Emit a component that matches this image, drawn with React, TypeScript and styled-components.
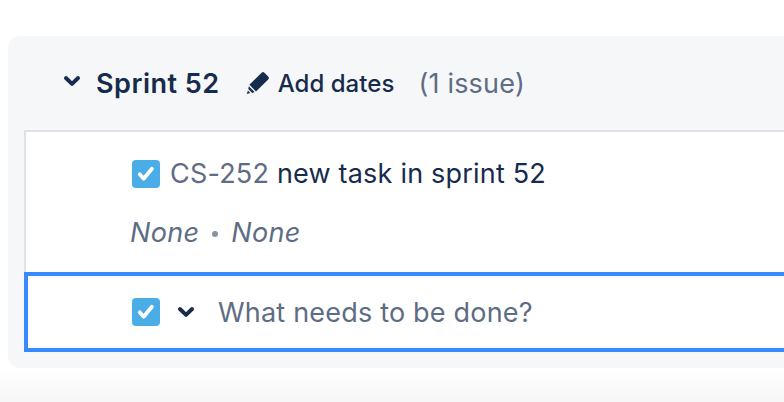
import React from 'react';
import styled, { createGlobalStyle } from 'styled-components';

const GlobalStyle = createGlobalStyle`
    html, body {
        margin: 0;
        padding: 0;
        background: #fff;
    }
    body {
        font-family: Inter, "Liberation Sans", sans-serif;
        color: #172b4d;
    }
`;

const Page = styled.div`
    width: 784px;
    height: 402px;
    overflow: hidden;
    padding-top: 36px;
    box-sizing: border-box;
    background: linear-gradient(to bottom, #fff 0, #fff 368px, #f7f7f7 402px);
`;

const Panel = styled.section`
    margin-left: 8px;
    width: 800px;
    height: 332px;
    box-sizing: border-box;
    padding: 0 0 16px 16px;
    background: #f6f7f9;
    border-radius: 12px;
    display: flex;
    flex-direction: column;
`;

const Header = styled.header`
    height: 94px;
    padding-left: 38px;
    box-sizing: border-box;
    display: flex;
    align-items: center;
`;

const Toggle = styled.svg<{ $lift?: number }>`
    width: 20px;
    height: 20px;
    flex: none;
    margin-bottom: ${p => p.$lift ?? 0}px;
    color: #172b4d;
`;

const SprintName = styled.h2`
    margin: 0 0 0 14px;
    font-size: 27px;
    font-weight: 600;
    letter-spacing: 0.5px;
    white-space: nowrap;
`;

const AddDates = styled.button`
    margin-left: 26px;
    padding: 0;
    border: 0;
    background: none;
    display: flex;
    align-items: center;
    gap: 8px;
    font: 500 24px Inter, "Liberation Sans", sans-serif;
    letter-spacing: 0.05px;
    color: #172b4d;
    white-space: nowrap;
`;

const Count = styled.span`
    margin-left: 24px;
    font-size: 27px;
    letter-spacing: 0.2px;
    color: #5e6c84;
    white-space: nowrap;
`;

const List = styled.div`
    flex: 1;
    display: flex;
    flex-direction: column;
    background: #fff;
`;

const Issue = styled.article`
    height: 142px;
    box-sizing: border-box;
    padding: 26px 0 0 106px;
    border: 2px solid #dfe1e6;
    border-bottom: 0;
`;

const TitleLine = styled.div`
    display: flex;
    align-items: center;
    gap: 10px;
    font-size: 27px;
    line-height: 32px;
    letter-spacing: 0.2px;
    white-space: nowrap;
`;

const IssueKey = styled.span`
    color: #5e6c84;
`;

const Meta = styled.div`
    margin-top: 27px;
    margin-left: -2px;
    display: flex;
    align-items: center;
    gap: 13px;
    font-size: 27px;
    line-height: 32px;
    letter-spacing: 0.3px;
    font-style: italic;
    color: #5e6c84;
`;

const Dot = styled.span`
    width: 6px;
    height: 6px;
    margin-top: 2px;
    border-radius: 50%;
    background: #8993a4;
`;

const Composer = styled.div`
    height: 80px;
    box-sizing: border-box;
    padding-left: 104px;
    border: 4px solid #388bff;
    display: flex;
    align-items: center;
    gap: 16px;
`;

const ComposerInput = styled.span`
    margin-left: 6px;
    font-size: 27px;
    letter-spacing: 0.2px;
    color: #5e6c84;
    white-space: nowrap;
`;

const CheckBox = styled.svg`
    width: 28px;
    height: 28px;
    flex: none;
`;

function TaskIcon() {
    return (
        <CheckBox viewBox="0 0 28 28">
            <rect width="28" height="28" rx="4" fill="#4bade8" />
            <path d="M7.7 14.3l4 4.4 8.2-10" fill="none" stroke="#fff" strokeWidth="3.8" strokeLinecap="round" strokeLinejoin="round" />
        </CheckBox>
    );
}

function Chevron({ lift }: { lift?: number }) {
    return (
        <Toggle $lift={lift} viewBox="0 0 16 16">
            <path d="M3.15 5.6L8 10.3l4.85-4.7" fill="none" stroke="currentColor" strokeWidth="3.1" strokeLinecap="round" strokeLinejoin="round" />
        </Toggle>
    );
}

function Pencil() {
    return (
        <svg width="24" height="24" viewBox="0 0 24 24">
            <path d="M15.6 1.8a2 2 0 0 1 2.8 0l3.8 3.8a2 2 0 0 1 0 2.8L10 20.4 3.4 13.8z" fill="#172b4d" />
            <path d="M2.8 15.2l5.8 5.9-2.4.9-3.9-3.9z M2 19.6l2.2 2.3-3.5 1.1z" fill="#172b4d" />
        </svg>
    );
}

export default function App() {
    return (
        <Page>
            <GlobalStyle />
            <Panel>
                <Header>
                    <Chevron lift={4} />
                    <SprintName>Sprint 52</SprintName>
                    <AddDates>
                        <Pencil />
                        Add dates
                    </AddDates>
                    <Count>(1 issue)</Count>
                </Header>
                <List>
                    <Issue>
                        <TitleLine>
                            <TaskIcon />
                            <span>
                                <IssueKey>CS-252</IssueKey> new task in sprint 52
                            </span>
                        </TitleLine>
                        <Meta>
                            <span>None</span>
                            <Dot />
                            <span>None</span>
                        </Meta>
                    </Issue>
                    <Composer>
                        <TaskIcon />
                        <Chevron />
                        <ComposerInput>What needs to be done?</ComposerInput>
                    </Composer>
                </List>
            </Panel>
        </Page>
    );
}
